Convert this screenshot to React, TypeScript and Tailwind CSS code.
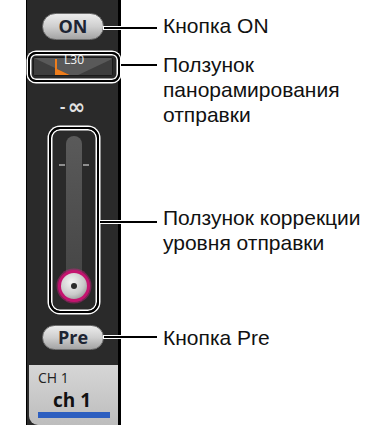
const Callout = ({ className }: { className: string }) => (
    <div
        className={`pointer-events-none absolute border-2 border-black shadow-[0_0_0_1.5px_#fff,inset_0_0_0_1.5px_#fff] ${className}`}
    />
);

const Leader = ({ className }: { className: string }) => (
    <div className={`absolute h-[2px] bg-black shadow-[0_0_0_1px_#fff] ${className}`} />
);

const PillButton = ({ label, tall = 27 }: { label: string; tall?: number }) => (
    <div
        className={`flex w-[62px] items-center justify-center rounded-full border border-[#6f6f6f] bg-linear-to-b from-[#ececec] via-[#cfcfcf] to-[#a4a4a4] text-[18px] font-bold text-[#1d2433] [font-family:'Open_Sans',sans-serif] ${
            tall === 27 ? "h-[27px]" : "h-[25px]"
        }`}
    >
        {label}
    </div>
);

const PanSlider = () => (
    <div className="relative ml-[6px] mt-[17px] h-[19px] w-[80px]">
        <div className="relative h-full w-full overflow-hidden rounded-[2px] border border-[#1b1b1b] bg-[#595959]">
            <svg width="80" height="19" viewBox="0 0 80 19" className="absolute left-0 top-0">
                <polygon points="0,0 40,19 0,19" fill="#3e3e3e" />
                <polygon points="80,0 40,19 80,19" fill="#3e3e3e" />
                <polygon points="22,10.5 40,19 22,19" fill="#ee7d1c" />
                <line x1="22" y1="1" x2="22" y2="19" stroke="#ee7d1c" strokeWidth="2" />
            </svg>
        </div>
        <span className="absolute left-[31px] top-[-3px] text-[12px] leading-[12px] text-[#f2f2f2] [font-family:'Open_Sans',sans-serif]">
            L30
        </span>
        <Callout className="-left-[5px] -right-[7px] -top-[5px] -bottom-[6px] rounded-[8px]" />
    </div>
);

const Fader = () => (
    <div className="relative ml-[22px] mt-[9px] h-[186px] w-[50px]">
        <div className="absolute left-[17px] top-[9px] h-[165px] w-[16px] rounded-t-full bg-linear-to-b from-[#5a5a5a] to-[#434343]" />
        <div className="absolute left-[10px] top-[37px] h-[2px] w-[6px] bg-[#8e8e8e]" />
        <div className="absolute left-[34px] top-[37px] h-[2px] w-[6px] bg-[#8e8e8e]" />
        <svg width="36" height="36" viewBox="0 0 36 36" className="absolute left-[7px] top-[141px]">
            <defs>
                <radialGradient id="knob" cx="40%" cy="35%" r="70%">
                    <stop offset="0%" stopColor="#f4f4f4" />
                    <stop offset="70%" stopColor="#c9c9c9" />
                    <stop offset="100%" stopColor="#9d9d9d" />
                </radialGradient>
            </defs>
            <circle cx="18" cy="18" r="17.5" fill="#d11d80" opacity="0.45" />
            <circle cx="18" cy="18" r="16" fill="#c4136f" />
            <circle cx="18" cy="18" r="13" fill="url(#knob)" />
            <circle cx="18" cy="18" r="3" fill="#2c2c2c" />
        </svg>
        <Callout className="inset-0 rounded-[11px]" />
    </div>
);

const Strip = () => (
    <div className="ml-[26px] flex h-[425px] w-[95px] flex-col border-l border-r-[3px] border-black bg-[#2a2a2a]">
        <div className="ml-[15px] mt-[13px]">
            <PillButton label="ON" />
        </div>
        <PanSlider />
        <div className="mt-[20px] flex items-center justify-center gap-[2px] font-bold text-[#e2e2e2] [font-family:'DejaVu_Sans',sans-serif]">
            <span className="text-[14px] leading-[22px]">-</span>
            <span className="text-[21px] leading-[22px]">∞</span>
        </div>
        <Fader />
        <div className="ml-[15px] mt-[12px]">
            <PillButton label="Pre" tall={25} />
        </div>
        <div className="ml-[2px] mt-[15px] flex h-[60px] flex-col rounded-bl-[9px] bg-linear-to-b from-[#d6d6d6] to-[#bdbdbd] pl-[9px] pt-[5px] [font-family:'Open_Sans',sans-serif]">
            <span className="text-[14px] leading-[16px] text-[#222]">CH 1</span>
            <span className="ml-[15px] mt-[4px] text-[19px] font-bold leading-[20px] text-[#111]">ch 1</span>
            <div className="mt-[2px] h-[6px] w-[72px] bg-[#2d5fc0]" />
        </div>
    </div>
);

export default function App() {
    return (
        <div className="relative flex h-[425px] w-[371px] overflow-hidden bg-white">
            <Strip />
            <div className="ml-[42px] flex flex-col text-[21px] leading-[25px] text-[#111] [font-family:'Liberation_Sans',Arial,sans-serif]">
                <p className="mt-[13px]">Кнопка ON</p>
                <p className="mt-[14px]">
                    Ползунок
                    <br />
                    панорамирования
                    <br />
                    отправки
                </p>
                <p className="mt-[78px] whitespace-nowrap">
                    Ползунок коррекции
                    <br />
                    уровня отправки
                </p>
                <p className="mt-[70px]">Кнопка Pre</p>
            </div>
            <Leader className="left-[104px] top-[27px] w-[53px]" />
            <Leader className="left-[121px] top-[64px] w-[36px]" />
            <Leader className="left-[100px] top-[221px] w-[57px]" />
            <Leader className="left-[104px] top-[336px] w-[53px]" />
        </div>
    );
}
